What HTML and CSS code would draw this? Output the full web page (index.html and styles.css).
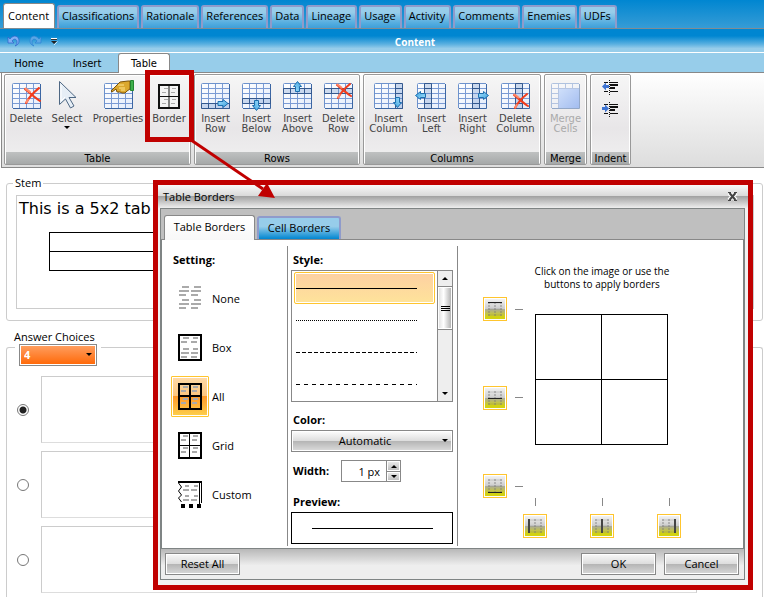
FILE: index.html
```html
<!DOCTYPE html>
<html lang="en">
<head>
<meta charset="utf-8">
<title>Content - Table Borders</title>
<link rel="stylesheet" href="styles.css">
</head>
<body>
<svg class="defs" aria-hidden="true">
  <defs>
    <linearGradient id="cell" x1="0" y1="0" x2="1" y2="1"><stop offset="0" stop-color="#fff"/><stop offset="1" stop-color="#e4ecfa"/></linearGradient>
    <linearGradient id="blue" x1="0" y1="0" x2="1" y2="1"><stop offset="0" stop-color="#a5e2ff"/><stop offset="1" stop-color="#3a9fdc"/></linearGradient>
    <linearGradient id="merge" x1="0" y1="0" x2="1" y2="1"><stop offset="0" stop-color="#cfdffa"/><stop offset="1" stop-color="#a3bdf0"/></linearGradient>
    <symbol id="grid" viewBox="0 0 29 26">
      <rect x=".5" y=".5" width="28" height="25" rx="1" fill="url(#cell)"/>
      <path d="M7.500 1v24M14.500 1v24M21.500 1v24M1 5.500h27M1 10.500h27M1 15.500h27M1 20.500h27" stroke="#7b9bd4" fill="none"/>
      <path d="M.5 25V1.500a1 1 0 0 1 1-1H28" stroke="#6d92cc" fill="none"/>
      <path d="M28.500 1v24.500H1" stroke="#3c66a3" fill="none"/>
    </symbol>
    <symbol id="cross" viewBox="0 0 16 16">
      <path d="M1 2C5 5 10 10 15 13M14 1C9 5 5 9 2 15" stroke="#f23c1c" stroke-width="2" fill="none" stroke-linecap="round"/>
      <path d="M1 1l5 4M4 11l-2 4" stroke="#ff8a6a" stroke-width="2" fill="none"/>
    </symbol>
    <symbol id="arrow" viewBox="0 0 11 9">
      <path d="M.5 2.500h5v-2l5 4-5 4v-2h-5z" fill="url(#blue)" stroke="#1d6fae"/>
    </symbol>
    <symbol id="dashes" viewBox="0 0 22 24">
      <path d="M3 1h7M15 1h7M0 5h10M12 5h10M0 9h7M12 9h7M3 14h7M15 14h7M0 18h10M12 18h10M0 22h7M12 22h7" stroke="#aaa" stroke-width="2"/>
    </symbol>
    <symbol id="mini" viewBox="0 0 14 14">
      <path d="M0 1h14M0 7h14M0 13h14" stroke="#777" stroke-opacity=".3"/>
      <path d="M1 0v14M7 0v14M13 0v14" stroke="#777" stroke-opacity=".4" stroke-width="2" stroke-dasharray="2 1"/>
    </symbol>
    <symbol id="outdent" viewBox="0 0 17 15">
      <path d="M2 2.500h4M8 2.500h8M8 5.500h8M8 8.500h5M8 11.500h8M2 11.500h4" stroke="#111"/>
      <path d="M8 5h8M8 8h5" stroke="#111" stroke-width="2"/>
      <path d="M7.500 0v15" stroke="#111" stroke-dasharray="1 1"/>
    </symbol>
  </defs>
</svg>

<div class="page">
  <header>
    <nav class="tabs">
      <a class="tab active" href="#">Content</a><a class="tab" href="#">Classifications</a><a class="tab" href="#">Rationale</a><a class="tab" href="#">References</a><a class="tab" href="#">Data</a><a class="tab" href="#">Lineage</a><a class="tab" href="#">Usage</a><a class="tab" href="#">Activity</a><a class="tab" href="#">Comments</a><a class="tab" href="#">Enemies</a><a class="tab" href="#">UDFs</a>
    </nav>
    <div class="titlebar">
      <div class="quick">
        <button aria-label="Undo"><svg width="13" height="12" viewBox="0 0 13 12"><path d="M1 2v6h6L5 6c2-3 5-2 5 1 0 2-1 3-2 4 3-1 4-3 4-5C12 1 7-1 3 4z" fill="#7fb0f4" stroke="#2e62c9" stroke-width=".7"/></svg></button>
        <button aria-label="Redo"><svg width="13" height="12" viewBox="0 0 13 12"><path d="M12 2v6H6l2-2C6 3 3 4 3 7c0 2 1 3 2 4-3-1-4-3-4-5 0-5 5-7 9-2z" fill="#5aa6e4" stroke="#2b83d4" stroke-width=".7"/></svg></button>
        <button aria-label="Customize"><svg width="7" height="7" viewBox="0 0 7 7"><path d="M0 .5h6" stroke="#fff"/><path d="M0 1.500h6" stroke="#333"/><path d="M0 3h6L3 6z" fill="#222"/><path d="M3 7l3.500-3.500" stroke="#fff" stroke-width=".7"/></svg></button>
      </div>
      <span>Content</span>
    </div>
    <nav class="ribbon-tabs">
      <a href="#">Home</a><a href="#">Insert</a><a href="#" class="active">Table</a>
    </nav>
    <div class="ribbon">
      <section class="group g-table">
        <div class="tools">
          <button><svg width="29" height="28"><use href="#grid" width="29" height="26"/><use href="#cross" x="12" y="4" width="17" height="17"/></svg>Delete</button>
          <button><svg width="29" height="28"><path d="M6.500-1.500v23l6-5.500 5 9 3.500-2-5-8.500h7z" fill="#e6eef6" stroke="#4e6783" stroke-linejoin="round"/><path d="M8 2v16l4-4" stroke="#fff" fill="none"/></svg>Select<i class="caret"></i></button>
          <button class="wide"><svg width="29" height="28"><use href="#grid" width="29" height="26"/><path d="M7 8l7-7 2-2 8-1 2 0v8l-3 2-2 2h-3l-2-1h-3l-1-3-4 3z" fill="#dba82e" stroke="#7b5208"/><path d="M14 2h6M15 5h6M17 7h4" stroke="#ffe58d"/><path d="M26.500-2.500h3v10h-3z" fill="#3fb04b" stroke="#23852f"/></svg>Properties</button>
          <button><svg width="24" height="28" viewBox="0 0 24 28"><rect x="2" y="2" width="20" height="23" fill="#f4f4f4" stroke="#111" stroke-width="2"/><path d="M7 5.500h4M5 9.500h4M15 5.500h4M14 9.500h4M7 16.500h4M5 20.500h4M15 16.500h4M14 20.500h4" stroke="#aaa"/><path d="M12 1v24" stroke="#111" stroke-width="1"/><path d="M2 13.500h20" stroke="#111"/></svg>Border</button>
        </div>
        <h2>Table</h2>
      </section>
      <section class="group g-rows">
        <div class="tools">
          <button><svg width="29" height="28"><use href="#grid" width="29" height="26"/><path d="M.5 20.500h28v5H.5zM7.500 21v4M14.500 21v4" fill="#4c7bc4" fill-opacity=".25" stroke="#34598f"/><use href="#arrow" x="16" y="16" width="12" height="9"/></svg>Insert<br>Row</button>
          <button><svg width="29" height="28"><use href="#grid" width="29" height="26"/><path d="M.5 15.500h28v5H.5zM7.500 16v4M21.500 16v4" fill="#4c7bc4" fill-opacity=".25" stroke="#34598f"/><g transform="translate(19 17) rotate(90)"><use href="#arrow" width="11" height="9"/></g></svg>Insert<br>Below</button>
          <button><svg width="29" height="28"><use href="#grid" width="29" height="26"/><path d="M.5 5.500h28v5H.5zM7.500 6v4M21.500 6v4" fill="#4c7bc4" fill-opacity=".25" stroke="#34598f"/><g transform="translate(10 9) rotate(-90)"><use href="#arrow" width="11" height="9"/></g></svg>Insert<br>Above</button>
          <button><svg width="29" height="28"><use href="#grid" width="29" height="26"/><path d="M.5 5.500h28v5H.5zM7.500 6v4M21.500 6v4" fill="#4c7bc4" fill-opacity=".25" stroke="#34598f"/><use href="#cross" x="12" y="0" width="16" height="16"/></svg>Delete<br>Row</button>
        </div>
        <h2>Rows</h2>
      </section>
      <section class="group g-cols">
        <div class="tools">
          <button><svg width="29" height="28"><use href="#grid" width="29" height="26"/><path d="M21.500.5h7v25h-7zM22 5.500h6M22 10.500h6" fill="#4c7bc4" fill-opacity=".25" stroke="#34598f"/><g transform="translate(28 14) rotate(90)"><use href="#arrow" width="11" height="9"/></g></svg>Insert<br>Column</button>
          <button><svg width="29" height="28"><use href="#grid" width="29" height="26"/><path d="M7.500.5h7v25h-7zM8 5.500h6M8 20.500h6" fill="#4c7bc4" fill-opacity=".25" stroke="#34598f"/><g transform="translate(9 17) rotate(180)"><use href="#arrow" width="11" height="9"/></g></svg>Insert<br>Left</button>
          <button><svg width="29" height="28"><use href="#grid" width="29" height="26"/><path d="M14.500.5h7v25h-7zM15 5.500h6M15 20.500h6" fill="#4c7bc4" fill-opacity=".25" stroke="#34598f"/><use href="#arrow" x="20" y="8" width="11" height="9"/></svg>Insert<br>Right</button>
          <button><svg width="29" height="28"><use href="#grid" width="29" height="26"/><path d="M14.500.5h7v25h-7zM15 5.500h6M15 20.500h6" fill="#4c7bc4" fill-opacity=".25" stroke="#34598f"/><use href="#cross" x="12" y="10" width="16" height="16"/></svg>Delete<br>Column</button>
        </div>
        <h2>Columns</h2>
      </section>
      <section class="group g-merge">
        <div class="tools">
          <button class="off"><svg width="29" height="28"><use href="#grid" width="29" height="26" opacity=".5"/><rect x="8" y="6" width="20" height="19" fill="url(#merge)"/></svg>Merge<br>Cells</button>
        </div>
        <h2>Merge</h2>
      </section>
      <section class="group g-indent">
        <div class="indents">
          <button aria-label="Outdent"><svg width="17" height="15"><use href="#outdent" width="17" height="15"/><path d="M0 6.500l4-4v2.500h3v3H4v2.500z" fill="#3d73d2"/></svg></button>
          <button aria-label="Indent"><svg width="17" height="15"><use href="#outdent" width="17" height="15"/><path d="M7 6.500l-4-4v2.500H0v3h3v2.500z" fill="#3d73d2"/></svg></button>
        </div>
        <h2>Indent</h2>
      </section>
    </div>
  </header>

  <main>
    <fieldset class="stem">
      <legend>Stem</legend>
      <div class="editor">
        <p>This is a 5x2 tab</p>
        <table><tr><td></td></tr><tr><td></td></tr></table>
      </div>
    </fieldset>
    <label class="choices-label" for="count">Answer Choices</label>
    <section class="choices">
      <span class="pick count"><select id="count"><option>4</option></select></span>
      <div class="choice"><input type="radio" name="answer" aria-label="Choice 1" checked><div></div></div>
      <div class="choice"><input type="radio" name="answer" aria-label="Choice 2"><div></div></div>
      <div class="choice"><input type="radio" name="answer" aria-label="Choice 3"><div></div></div>
    </section>
  </main>
</div>

<div class="dialog" role="dialog" aria-labelledby="dialog-title">
  <div class="dialog-title">
    <span id="dialog-title">Table Borders</span>
    <button aria-label="Close"><svg width="11" height="11" viewBox="0 0 11 11"><path d="M2 2l7 7M9 2L2 9" stroke="#fff" stroke-width="4"/><path d="M2.500 2l6 7M8.500 2l-6 7" stroke="#444" stroke-width="2"/><path d="M1 1.500h3M7 1.500h3M1 9.500h3M7 9.500h3" stroke="#444"/></svg></button>
  </div>
  <div class="frame">
    <div class="dialog-tabs">
      <button class="active">Table Borders</button><button>Cell Borders</button>
    </div>
    <div class="panel">
      <section class="settings">
        <h3>Setting:</h3>
        <button><span><svg width="24" height="27" viewBox="0 0 24 27"><use href="#dashes" x="1" y="1" width="22" height="24"/></svg></span>None</button>
        <button><span><svg width="24" height="27" viewBox="0 0 24 27"><rect x="1" y="1" width="22" height="25" fill="#fff" stroke="#000" stroke-width="2"/><path d="M5 4h6M15 4h5M3 8h6M13 8h6M5 15h6M15 15h5M3 19h8M13 19h7M3 23h6M13 23h6" stroke="#aaa" stroke-width="2"/></svg></span>Box</button>
        <button class="on"><span><svg width="24" height="27" viewBox="0 0 24 27"><path d="M5 4h5M15 4h5M3 8h5M14 8h5M5 16h5M15 16h5M3 20h5M14 20h5" stroke="#aaa" stroke-width="2"/><path d="M1 1h22v25H1zM12 1v25M1 13h22" fill="none" stroke="#000" stroke-width="2"/></svg></span>All</button>
        <button><span><svg width="24" height="27" viewBox="0 0 24 27"><path d="M5 4h5M15 4h5M3 8h5M14 8h5M5 16h5M15 16h5M3 20h5M14 20h5" stroke="#aaa" stroke-width="2"/><rect x="1" y="1" width="22" height="25" fill="none" stroke="#000" stroke-width="2"/><path d="M11.500 1v25M1 13.500h22" stroke="#000"/></svg></span>Grid</button>
        <button><span><svg width="24" height="27" viewBox="0 0 24 27"><path d="M7 5h4M16 5h4M5 9h6M13 9h6M7 15h4M16 15h4M5 19h6M13 19h6" stroke="#aaa" stroke-width="2"/><path d="M0 1h24" stroke="#000" stroke-width="2"/><path d="M.5 2l3 4-3 4 3 4-3 3 3 4M21.500 2v22M23.500 2v20" stroke="#000" fill="none"/><path d="M3 23h4v4H3zM11 23h4v4h-4zM19 23h4v4h-4z"/></svg></span>Custom</button>
      </section>
      <section class="style">
        <h3>Style:</h3>
        <div class="list">
          <div class="options">
            <button class="on" aria-label="Solid"><i class="solid"></i></button>
            <button aria-label="Dotted"><i class="dotted"></i></button>
            <button aria-label="Short dashes"><i class="short"></i></button>
            <button aria-label="Long dashes"><i class="long"></i></button>
          </div>
          <div class="scroll">
            <button aria-label="Scroll up"><i class="up"></i></button>
            <div class="thumb"><i></i><i></i><i></i></div>
            <button aria-label="Scroll down" class="last"><i class="caret"></i></button>
          </div>
        </div>
        <h3><label for="color">Color:</label></h3>
        <span class="pick color"><select id="color"><option>Automatic</option></select></span>
        <div class="width-row">
          <h3><label for="width">Width:</label></h3>
          <div class="spin">
            <input id="width" type="text" value="1 px">
            <div><button aria-label="Increase"><i class="up"></i></button><button aria-label="Decrease"><i class="caret"></i></button></div>
          </div>
        </div>
        <h3 class="preview-head">Preview:</h3>
        <div class="preview"><i class="solid"></i></div>
      </section>
      <section class="apply">
        <p>Click on the image or use the<br>buttons to apply borders</p>
        <div class="picker">
          <div class="sides">
            <div><button aria-label="Top border"><svg width="14" height="14"><use href="#mini" width="14" height="14"/><path d="M0 .5h14" stroke="#222"/></svg></button><i></i></div>
            <div><button aria-label="Middle border"><svg width="14" height="14"><use href="#mini" width="14" height="14"/><path d="M0 7.500h14" stroke="#222"/></svg></button><i></i></div>
            <div><button aria-label="Bottom border"><svg width="14" height="14"><use href="#mini" width="14" height="14"/><path d="M0 13.500h14" stroke="#222"/></svg></button><i></i></div>
          </div>
          <div class="board">
            <div class="cells"><i></i><i></i><i></i><i></i></div>
            <div class="bottoms">
              <div><i></i><button aria-label="Left border"><svg width="14" height="14"><use href="#mini" width="14" height="14"/><path d="M1 0v14" stroke="#444" stroke-width="2"/></svg></button></div>
              <div><i></i><button aria-label="Center border"><svg width="14" height="14"><use href="#mini" width="14" height="14"/><path d="M7 0v14" stroke="#444" stroke-width="2"/></svg></button></div>
              <div><i></i><button aria-label="Right border"><svg width="14" height="14"><use href="#mini" width="14" height="14"/><path d="M13 0v14" stroke="#444" stroke-width="2"/></svg></button></div>
            </div>
          </div>
        </div>
      </section>
    </div>
    <footer>
      <button class="btn">Reset All</button>
      <span></span>
      <button class="btn">OK</button>
      <button class="btn">Cancel</button>
    </footer>
  </div>
</div>

<svg class="callout" width="140" height="140" aria-hidden="true">
  <rect x="2.500" y="2.500" width="44" height="67" fill="none" stroke="#c00000" stroke-width="5"/>
  <path d="M46 70l72 49" stroke="#c00000" stroke-width="3"/>
  <path d="M130 128l-17-2 9-13z" fill="#c00000"/>
</svg>
</body>
</html>
```
FILE: styles.css
```css
* { box-sizing: border-box; }
html { overflow: hidden; }
body { margin: 0; background: #fff; color: #000; font: 11px/16px "Open Sans", "Noto Sans", sans-serif; }
button, select, input { font: inherit; color: inherit; margin: 0; padding: 0; }
button { border: 0; background: none; }
a { color: inherit; text-decoration: none; }
h2, h3, p { margin: 0; }
svg { display: block; }
.defs { position: absolute; width: 0; height: 0; }
.page { display: flex; flex-direction: column; height: 100vh; }

.tabs { display: flex; align-items: flex-end; gap: 2px; height: 29px; padding-left: 3px; background: linear-gradient(#0086d1, #369cd6); border-bottom: 1px solid #7f8c94; }
.tab { height: 23px; padding: 1px 3px; border: 2px solid #8f9bcb; border-bottom: 0; border-radius: 3px 3px 0 0; background: linear-gradient(#97cdea 25%, #56aee0 75%, #3d9fd9); white-space: nowrap; }
.tab:nth-child(n+6) { padding-right: 4px; }
.tab.active { height: 25px; padding: 4px 5px 4px 4px; border: 1px solid #888; border-bottom: 0; background: #fff; }

.titlebar { position: relative; display: flex; align-items: center; justify-content: center; height: 23px; padding: 2px 0 0 66px; background: linear-gradient(#0086d1 30%, #58afe0 65%, #97cdea 85%); color: #fff; font-size: 10px; font-weight: 700; }
.quick { position: absolute; left: 7px; top: 6px; display: flex; align-items: center; gap: 9px; }
.ribbon-tabs { display: flex; height: 21px; border-top: 1px solid #fff; background: #97cdea; border-bottom: 1px solid #888; font: 10px/21px "DejaVu Sans", sans-serif; }
.ribbon-tabs a { width: 58px; text-align: center; }
.ribbon-tabs a.active { width: 52px; height: 20px; margin-left: 2px; border: 1px solid #888; border-bottom: 0; border-radius: 3px 3px 0 0; background: #fff; line-height: 19px; }

.ribbon { display: flex; gap: 3px; height: 95px; margin-left: 1px; padding: 1px 2px 2px; border: 1px solid #888; border-width: 0 0 1px 1px; background: linear-gradient(#fff, #ddd); font: 10px/10px "DejaVu Sans", sans-serif; }
.group { display: flex; flex-direction: column; border: 1px solid #999; border-radius: 2px; background: linear-gradient(#f6f6f6, #e8e6e8 60%, #f0f0f0); box-shadow: inset 0 0 0 1px #fff; }
.group h2 { margin: 0 1px; height: 12px; background: linear-gradient(#bfc1c1, #a5a8a8); font: 10px/13px "DejaVu Sans", sans-serif; text-align: center; }
.tools { flex: 1; display: flex; justify-content: center; align-items: flex-start; padding-top: 8px; color: #444; }
.tools button { display: flex; flex-direction: column; align-items: center; width: 41px; line-height: 10px; text-align: center; }
.tools svg { margin-bottom: 3px; overflow: visible; }
.tools button.wide { width: 61px; }
.tools .off { color: #aaa; }
.g-table { width: 187px; }
.g-rows { width: 166px; }
.g-cols { width: 178px; }
.g-cols button:first-child, .g-cols button:last-child { width: 45px; }
.g-merge { width: 43px; }
.g-indent { width: 41px; }
.indents { flex: 1; display: flex; flex-direction: column; align-items: center; gap: 7px; padding-top: 5px; }
.caret, .up { display: block; border: 3px solid transparent; border-top-color: #000; border-bottom: 0; }
.up { border-top: 0; border-bottom: 3px solid #000; }
.tools .caret { margin-top: 2px; }

main { flex: 1; display: flex; flex-direction: column; min-height: 0; padding: 7px 1px 0 6px; }
.stem { flex: none; height: 146px; margin: 0; padding: 4px 8px 0 9px; border: 1px solid #ccc; border-radius: 3px; }
.stem legend { margin-left: -3px; padding: 0 2px; }
.editor { height: 114px; border: 1px solid #ccc; font: 16px/24px "DejaVu Sans", sans-serif; padding: 1px 2px; }
.editor table { width: 400px; margin: 11px 0 0 30px; border-collapse: collapse; }
.editor td { height: 19px; padding: 0; border: 1px solid #000; }
.choices-label { position: relative; z-index: 1; margin: 8px 0 0 8px; width: 94px; }
.choices { flex: 1; border: 1px solid #ccc; border-bottom: 0; border-radius: 3px 3px 0 0; margin-top: 2px; padding-left: 12px; }
.pick { position: relative; display: block; border: 1px solid #888; padding: 1px; background: #fff; }
.pick::after { content: ""; position: absolute; right: 4px; top: 8px; border: 3px solid transparent; border-top-color: #000; border-bottom: 0; }
.pick select { appearance: none; display: block; width: 100%; height: 18px; border: 0; border-radius: 0; outline: 0; }
.count { width: 78px; margin: -4px 0 10px; box-shadow: 0 0 0 4px #fff; }
.count select { padding-left: 3px; background: linear-gradient(#ff9d5e, #ff6a0a); color: #fff; font-weight: 700; }
.choice { display: flex; align-items: center; gap: 12px; height: 67px; margin-bottom: 8px; }
.choice div { width: 656px; height: 67px; border: 1px solid #ccc; border-bottom-color: #ddd; }
.choice input { appearance: none; flex: none; width: 12px; height: 12px; margin-left: -2px; border: 1px solid #777; border-radius: 50%; background: #fff; }
.choice input:checked { background: radial-gradient(circle, #222 0 3px, #fff 4px); }

.dialog { position: absolute; left: 153px; right: 11px; top: 180px; border: 5px solid #c00000; padding: 0 3px 5px 2px; background: #f2f2f2; }
.dialog-title { display: flex; justify-content: space-between; align-items: center; height: 23px; margin: 0 -3px 0 -2px; padding: 0 10px 0 5px; background: linear-gradient(#f8f8f8, #d8d8d8 49%, #a3a3a3 50%, #eee); }
.frame { border: 1px solid #7f8484; }
.dialog-tabs { display: flex; align-items: flex-end; gap: 2px; height: 31px; padding-left: 3px; background: #bfbfbf; border-bottom: 1px solid #888; }
.dialog-tabs button { height: 23px; width: 84px; border: 2px solid #8f9bcb; border-bottom: 0; border-radius: 3px 3px 0 0; background: linear-gradient(#97cdea 40%, #0086d1); line-height: 14px; padding-bottom: 2px; }
.dialog-tabs .active { width: 91px; height: 25px; margin-bottom: -1px; border: 1px solid #888; border-bottom: 0; background: linear-gradient(#fff, #f8f8f8); }
.panel { display: flex; gap: 3px; background: #fff; border: 1px solid #7f8484; border-width: 0 1px 1px; padding: 6px 0 2px 9px; }
.panel section { height: 300px; }
.panel h3 { font-size: 11px; line-height: 16px; font-weight: 700; }
.settings { width: 117px; border-right: 1px solid #888; padding-top: 6px; display: flex; flex-direction: column; align-items: flex-start; }
.settings h3 { margin: 0 0 10px 2px; }
.settings button { display: flex; align-items: center; gap: 3px; height: 41px; margin-bottom: 8px; }
.settings button span { display: flex; align-items: center; justify-content: center; width: 38px; height: 41px; border: 1px solid transparent; border-radius: 1px; }
.settings .on span { border-color: #ffc52e; box-shadow: inset 0 0 0 1px #fff; background: linear-gradient(#ffdaa8, #fcc67e 49%, #fd9a2c 50%, #fdd04c); }
.style { width: 167px; padding: 6px 4px 0 0; border-right: 1px solid #888; }
.style h3 { margin-left: 2px; }
.list { display: flex; height: 132px; margin-top: 2px; margin-bottom: 10px; border: 1px solid #888; }
.options { flex: 1; padding: 1px 2px; }
.options button { display: block; width: 100%; height: 32px; border: 1px solid transparent; border-radius: 2px; }
.options .on { border-color: #ffc52e; box-shadow: inset 0 0 0 1px #fff; background: linear-gradient(#fdd0a2, #fee39a); }
.options i, .preview i { display: block; width: 121px; height: 1px; margin-left: 1px; background: #000; }
.options .dotted { background: repeating-linear-gradient(90deg, #000 0 1px, transparent 1px 2px); }
.options .short { background: repeating-linear-gradient(90deg, #000 0 4px, transparent 4px 6px); }
.options .long { background: repeating-linear-gradient(90deg, #000 0 4px, transparent 4px 8px); }
.scroll { display: flex; flex-direction: column; width: 15px; border-left: 1px solid #888; background: #eee; }
.scroll button { display: flex; align-items: center; justify-content: center; height: 15px; width: 100%; }
.scroll .last { margin-top: auto; }
.thumb { height: 44px; border: 1px solid #888; border-width: 1px 0; box-shadow: inset 0 0 0 1px #fff; background: linear-gradient(90deg, #ddd, #fff 40%, #aaa); display: flex; flex-direction: column; align-items: center; justify-content: center; gap: 1px; }
.thumb i { width: 9px; height: 1px; background: #000; }
.color { margin: 2px 0 8px; }
.color select { background: linear-gradient(#fafafa, #ddd 49%, #b4b4b4 50%, #d8d8d8); text-align: center; text-align-last: center; padding-right: 14px; }
.width-row { display: flex; align-items: center; gap: 12px; height: 22px; margin-bottom: 12px; }
.spin { display: flex; width: 60px; height: 22px; border: 1px solid #888; }
.spin input { flex: 1; min-width: 0; border: 0; outline: 0; text-align: right; padding: 2px 6px 0 0; }
.spin div { width: 14px; border-left: 1px solid #888; }
.spin button { display: flex; align-items: center; justify-content: center; width: 100%; height: 10px; background: linear-gradient(#eee, #bbb); box-shadow: inset 0 0 0 1px #fff; }
.spin button + button { border-top: 1px solid #888; }
.preview-head { margin-bottom: 2px; }
.preview { display: flex; align-items: center; justify-content: center; height: 32px; border: 1px solid #000; }

.apply { flex: 1; padding-top: 19px; display: flex; flex-direction: column; align-items: center; }
.apply p { font-size: 10px; line-height: 13px; text-align: center; }
.picker { display: flex; margin-top: 6px; margin-right: 40px; }
.sides { display: flex; flex-direction: column; justify-content: space-between; height: 201px; width: 40px; }
.sides div { display: flex; align-items: center; gap: 8px; }
.sides i { width: 8px; height: 1px; background: #888; }
.picker button { display: flex; align-items: center; justify-content: center; width: 24px; height: 24px; border: 1px solid #ffc52e; background: linear-gradient(#f6f6f6, #ccc 49%, #aaaaa0 50%, #d2d210 85%); box-shadow: inset 0 0 0 1px #fff; }
.board { width: 158px; padding-top: 17px; }
.cells { display: grid; grid-template-columns: 1fr 1fr; grid-template-rows: 1fr 1fr; gap: 1px; width: 133px; height: 131px; margin: 0 auto 53px 12px; border: 1px solid #000; background: #000; }
.cells i { background: #fff; }
.bottoms { display: flex; justify-content: space-between; }
.bottoms div { display: flex; flex-direction: column; align-items: center; gap: 8px; }
.bottoms i { width: 1px; height: 8px; background: #888; }

footer { display: flex; gap: 8px; align-items: center; height: 30px; padding: 0 5px 0 4px; background: linear-gradient(#b8b8b8, #eee 55%); }
footer span { flex: 1; }
.btn { width: 75px; height: 22px; border: 1px solid #888; background: linear-gradient(#f8f8f8, #ddd 49%, #b4b4b4 50%, #d8d8d8); box-shadow: inset 0 0 0 1px #fff; }
.callout { position: absolute; left: 145px; top: 70px; pointer-events: none; }
```
